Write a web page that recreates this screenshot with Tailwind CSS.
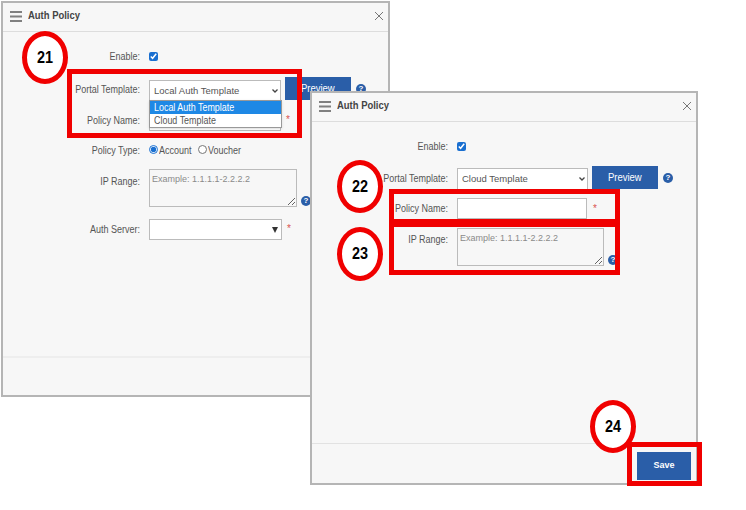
<!DOCTYPE html>
<html lang="en">
<head>
    <meta charset="UTF-8">
    <title>Auth Policy</title>
    <script src="https://cdn.jsdelivr.net/npm/@tailwindcss/browser@4"></script>
</head>
<body class="bg-white font-['Liberation_Sans',Arial,sans-serif]">
<div class="relative w-[746px] h-[510px] overflow-hidden">

    <!-- Window 1 -->
    <div class="absolute left-[1px] top-[1px] w-[389px] h-[396px] flex flex-col bg-[#f7f7f7] border-2 border-[#b5b5b5] text-[#555]">
        <div class="h-[29px] shrink-0 flex items-center pl-[7px] pr-[3px] pb-[2px] border-b border-[#dddddd]">
            <svg class="w-[12px] h-[11px] text-[#808080]" viewBox="0 0 12 11" fill="currentColor"><rect width="12" height="2" y="0"/><rect width="12" height="2" y="4.5"/><rect width="12" height="2" y="9"/></svg>
            <span class="ml-[6px] text-[10.5px] font-bold text-[#444] scale-x-90 origin-left">Auth Policy</span>
            <svg class="ml-auto mr-[1px] w-[10px] h-[10px] text-[#777]" viewBox="0 0 10 10" fill="none" stroke="currentColor" stroke-width="1"><path d="M1 1l8 8M9 1l-8 8"/></svg>
        </div>

        <div class="flex-1 flex flex-col pt-[18px] text-[10px]">
            <div class="h-[12px] flex items-center">
                <span class="w-[137px] text-right scale-x-90 origin-right">Enable:</span>
                <input type="checkbox" checked class="ml-[9px] w-[9px] h-[9px] accent-[#1a6fd0]">
            </div>
            <div class="mt-[17px] h-[24px] flex items-center">
                <span class="w-[137px] text-right -mt-[4px] scale-x-90 origin-right">Portal Template:</span>
                <span class="relative ml-[9px] w-[132px] h-[22px]">
                    <select class="w-full h-full appearance-none pl-[4px] pt-[1px] border border-[#bbbbbb] bg-white text-[9.5px] text-[#555]"><option>Local Auth Template</option></select>
                    <svg class="absolute right-[3px] top-[9px] w-[6px] h-[4px] text-[#444]" viewBox="0 0 6 4" fill="none" stroke="currentColor" stroke-width="1.3"><path d="M.5 .5L3 3 5.5 .5"/></svg>
                </span>
                <span class="ml-[4px] -mt-[5px] w-[66px] h-[23px] flex items-center justify-center bg-[#2a5ea8] text-white text-[10px]"><span class="scale-x-95">Preview</span></span>
                <span class="ml-[5px] -mt-[4px] w-[10px] h-[10px] rounded-full bg-[#2a5ea8] text-white text-[8px] font-bold flex items-center justify-center">?</span>
            </div>
            <div class="mt-[8px] h-[20px] flex items-center">
                <span class="w-[137px] text-right -mt-[2px] scale-x-90 origin-right">Policy Name:</span>
                <input type="text" class="ml-[9px] w-[132px] h-[20px] border border-[#bbbbbb] bg-white">
                <span class="ml-[5px] text-[#d9534f] text-[10px] -mt-[3px]">*</span>
            </div>
            <div class="mt-[13px] h-[12px] flex items-center">
                <span class="w-[137px] text-right scale-x-90 origin-right">Policy Type:</span>
                <input type="radio" checked name="t1" class="ml-[9px] w-[9px] h-[9px] -mt-[1px] accent-[#1a6fd0]">
                <span class="ml-[1px] w-[39px] scale-x-90 origin-left">Account</span>
                <input type="radio" name="t1" class="w-[9px] h-[9px] -mt-[1px]">
                <span class="ml-[1px] scale-x-90 origin-left">Voucher</span>
            </div>
            <div class="mt-[13px] h-[38px] flex items-start">
                <span class="w-[137px] text-right mt-[5px] scale-x-90 origin-right">IP Range:</span>
                <textarea placeholder="Example: 1.1.1.1-2.2.2.2" class="ml-[9px] w-[148px] h-[38px] px-[2px] py-[3px] border border-[#bbbbbb] bg-[#f7f7f7] text-[9px] placeholder:text-[#8a8a8a]"></textarea>
                <span class="ml-[4px] mt-[27px] w-[10px] h-[10px] rounded-full bg-[#2a5ea8] text-white text-[8px] font-bold flex items-center justify-center">?</span>
            </div>
            <div class="mt-[12px] h-[21px] flex items-center">
                <span class="w-[137px] text-right scale-x-90 origin-right">Auth Server:</span>
                <span class="ml-[9px] w-[133px] h-[21px] pr-[2px] border border-[#bbbbbb] bg-white flex items-center justify-end">
                    <svg class="w-[6px] h-[6px] mr-[1px] text-[#333]" viewBox="0 0 6 6" fill="currentColor"><path d="M0 0h6L3 6z"/></svg>
                </span>
                <span class="ml-[5px] text-[#d9534f] text-[10px] -mt-[3px]">*</span>
            </div>
        </div>

        <div class="h-[39px] shrink-0 border-t-2 border-[#eeeeee]"></div>

        <!-- open dropdown list -->
        <div class="absolute left-[146px] top-[97px] w-[133px] h-[28px] bg-white border border-[#999999] shadow-sm text-[10.5px] leading-[13px]">
            <div class="h-[13px] px-[4px] bg-[#1e88e5] text-white"><span class="inline-block scale-x-[.85] origin-left whitespace-nowrap">Local Auth Template</span></div>
            <div class="h-[13px] px-[4px] text-[#555]"><span class="inline-block scale-x-[.85] origin-left whitespace-nowrap">Cloud Template</span></div>
        </div>
    </div>

    <!-- Window 2 -->
    <div class="absolute left-[310px] top-[91px] w-[388px] h-[394px] flex flex-col bg-[#f7f7f7] border-2 border-[#b5b5b5] text-[#555]">
        <div class="h-[29px] shrink-0 flex items-center pl-[7px] pr-[3px] pb-[2px] border-b border-[#dddddd]">
            <svg class="w-[12px] h-[11px] text-[#808080]" viewBox="0 0 12 11" fill="currentColor"><rect width="12" height="2" y="0"/><rect width="12" height="2" y="4.5"/><rect width="12" height="2" y="9"/></svg>
            <span class="ml-[6px] text-[10.5px] font-bold text-[#444] scale-x-90 origin-left">Auth Policy</span>
            <svg class="ml-auto mr-[1px] w-[10px] h-[10px] text-[#777]" viewBox="0 0 10 10" fill="none" stroke="currentColor" stroke-width="1"><path d="M1 1l8 8M9 1l-8 8"/></svg>
        </div>

        <div class="flex-1 flex flex-col pt-[18px] text-[10px]">
            <div class="h-[12px] flex items-center">
                <span class="w-[136px] text-right scale-x-90 origin-right">Enable:</span>
                <input type="checkbox" checked class="ml-[9px] w-[9px] h-[9px] accent-[#1a6fd0]">
            </div>
            <div class="mt-[15px] h-[23px] flex items-center">
                <span class="w-[136px] text-right -mt-[1px] scale-x-90 origin-right">Portal Template:</span>
                <span class="relative ml-[9px] w-[131px] h-[22px]">
                    <select class="w-full h-full appearance-none pl-[4px] pt-[2px] border border-[#bbbbbb] bg-white text-[9.5px] text-[#555]"><option>Cloud Template</option></select>
                    <svg class="absolute right-[3px] top-[9px] w-[6px] h-[4px] text-[#444]" viewBox="0 0 6 4" fill="none" stroke="currentColor" stroke-width="1.3"><path d="M.5 .5L3 3 5.5 .5"/></svg>
                </span>
                <span class="ml-[4px] -mt-[2px] w-[66px] h-[23px] flex items-center justify-center bg-[#2a5ea8] text-white text-[10px]"><span class="scale-x-95">Preview</span></span>
                <span class="ml-[5px] -mt-[2px] w-[10px] h-[10px] rounded-full bg-[#2a5ea8] text-white text-[8px] font-bold flex items-center justify-center">?</span>
            </div>
            <div class="mt-[8px] h-[21px] flex items-center">
                <span class="w-[136px] text-right scale-x-90 origin-right">Policy Name:</span>
                <input type="text" class="ml-[9px] w-[130px] h-[21px] border border-[#bbbbbb] bg-white">
                <span class="ml-[6px] text-[#d9534f] text-[10px]">*</span>
            </div>
            <div class="mt-[9px] h-[38px] flex items-start">
                <span class="w-[136px] text-right mt-[4px] scale-x-90 origin-right">IP Range:</span>
                <textarea placeholder="Example: 1.1.1.1-2.2.2.2" class="ml-[9px] w-[147px] h-[38px] px-[2px] py-[3px] border border-[#bbbbbb] bg-[#f7f7f7] text-[9px] placeholder:text-[#8a8a8a]"></textarea>
                <span class="ml-[4px] mt-[27px] w-[10px] h-[10px] rounded-full bg-[#2a5ea8] text-white text-[8px] font-bold flex items-center justify-center">?</span>
            </div>
        </div>

        <div class="h-[40px] shrink-0 border-t border-[#e2e2e2] flex items-start justify-end pr-[5px] pt-[8px]">
            <span class="w-[54px] h-[28px] flex items-center justify-center bg-[#2a5ea8] text-white text-[9px] font-bold">Save</span>
        </div>
    </div>

    <!-- Red annotation boxes -->
    <div class="absolute left-[67px] top-[69px] w-[235px] h-[69px] border-[5px] border-[#f00000]"></div>
    <div class="absolute left-[389px] top-[189px] w-[231px] h-[35px] border-[5px] border-[#f00000]"></div>
    <div class="absolute left-[389px] top-[222px] w-[231px] h-[53px] border-[5px] border-[#f00000]"></div>
    <div class="absolute left-[627px] top-[442px] w-[75px] h-[44px] border-[5px] border-[#f00000]"></div>

    <!-- Numbered callouts -->
    <div class="absolute left-[22px] top-[31px] w-[46px] h-[53px] rounded-[50%] border-[5px] border-[#f00000] bg-white flex items-center justify-center text-[16px] font-bold text-black"><span class="scale-x-90">21</span></div>
    <div class="absolute left-[337px] top-[160px] w-[46px] h-[53px] rounded-[50%] border-[5px] border-[#f00000] bg-white flex items-center justify-center text-[16px] font-bold text-black"><span class="scale-x-90">22</span></div>
    <div class="absolute left-[337px] top-[227px] w-[46px] h-[54px] rounded-[50%] border-[5px] border-[#f00000] bg-white flex items-center justify-center text-[16px] font-bold text-black"><span class="scale-x-90">23</span></div>
    <div class="absolute left-[590px] top-[400px] w-[46px] h-[53px] rounded-[50%] border-[5px] border-[#f00000] bg-white flex items-center justify-center text-[16px] font-bold text-black"><span class="scale-x-90">24</span></div>
</div>
</body>
</html>
